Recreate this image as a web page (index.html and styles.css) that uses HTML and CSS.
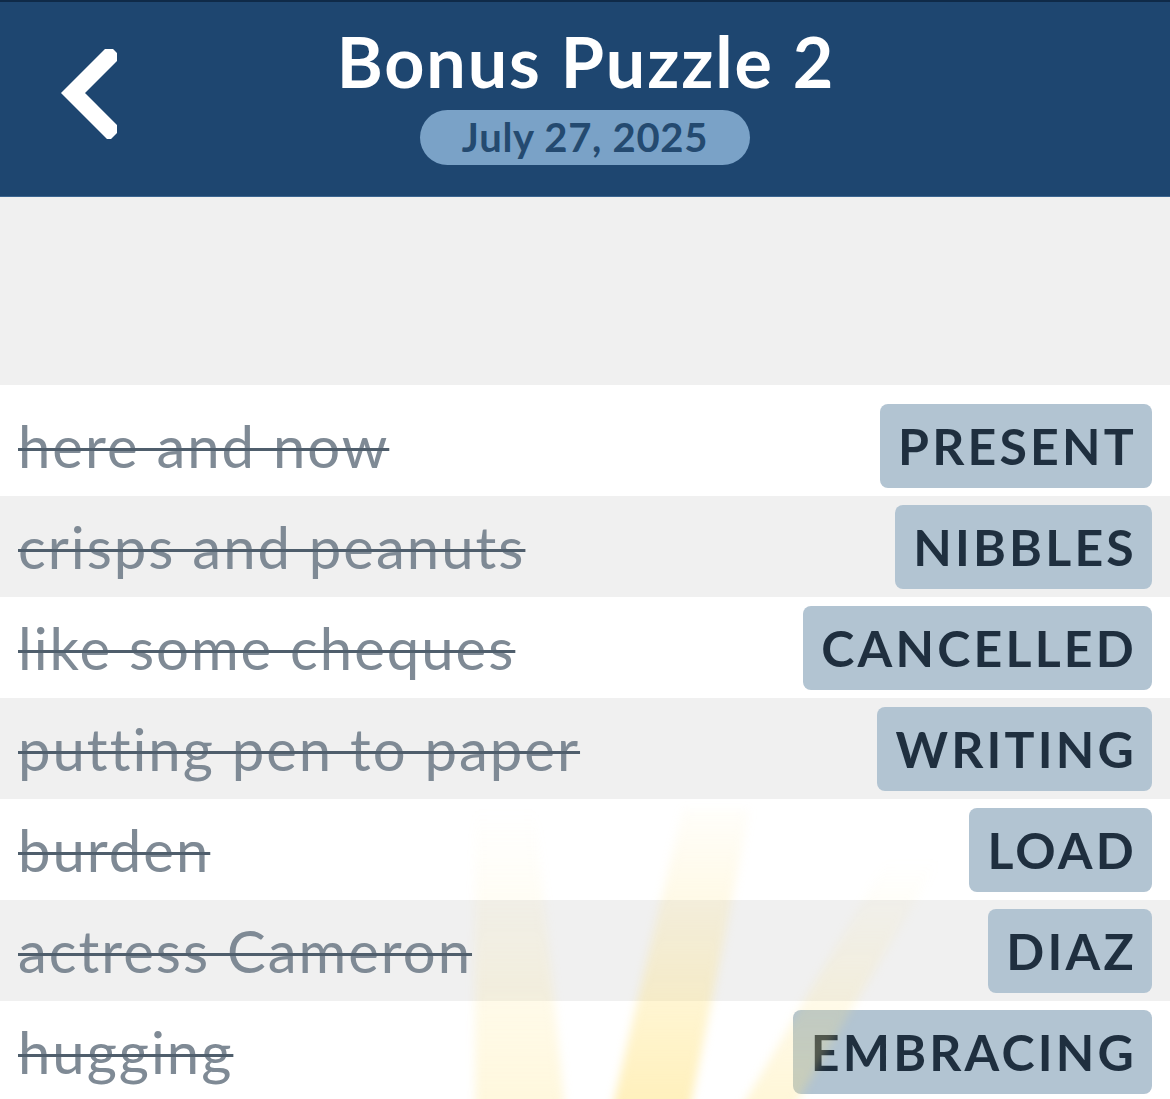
FILE: index.html
```html
<!DOCTYPE html>
<html>
<head>
<meta charset="utf-8">
<link rel="stylesheet" href="styles.css">
</head>
<body>
<div class="app">
  <header class="header">
    <button class="back" aria-label="Back">
      <svg width="60" height="90" viewBox="0 0 60 90"><path d="M52 8 L16 44 L52 80" fill="none" stroke="#fff" stroke-width="17" stroke-linecap="square" stroke-linejoin="miter"/></svg>
    </button>
    <div class="titles">
      <h1 class="title">Bonus Puzzle 2</h1>
      <div class="date">July 27, 2025</div>
    </div>
  </header>
  <div class="spacer"></div>
  <ul class="list">
    <li class="row"><span class="clue">here and now</span><span class="answer">PRESENT</span></li>
    <li class="row alt"><span class="clue">crisps and peanuts</span><span class="answer">NIBBLES</span></li>
    <li class="row"><span class="clue">like some cheques</span><span class="answer">CANCELLED</span></li>
    <li class="row alt"><span class="clue">putting pen to paper</span><span class="answer">WRITING</span></li>
    <li class="row"><span class="clue">burden</span><span class="answer">LOAD</span></li>
    <li class="row alt"><span class="clue">actress Cameron</span><span class="answer">DIAZ</span></li>
    <li class="row"><span class="clue">hugging</span><span class="answer">EMBRACING</span></li>
  </ul>
  <div class="rays">
    <div class="ray r1"></div>
    <div class="ray r2"></div>
    <div class="ray r3"></div>
  </div>
</div>
</body>
</html>
```
FILE: styles.css
```css
* { box-sizing: border-box; }
html, body { margin: 0; padding: 0; }
body {
  width: 1170px;
  height: 1099px;
  overflow: hidden;
  background: #ffffff;
  font-family: Lato, "Noto Sans", sans-serif;
}
.app {
  position: relative;
  width: 1170px;
  height: 1099px;
  overflow: hidden;
  background: #f0f0f0;
}
.header {
  height: 197px;
  background: #1e4670;
  border-top: 2px solid #0f2a48;
  border-bottom: 1px solid #3b6590;
  display: flex;
  align-items: flex-start;
  position: relative;
}
.back {
  position: absolute;
  left: 52px;
  top: 44px;
  background: none;
  border: 0;
  padding: 0;
  width: 70px;
  height: 95px;
  display: flex;
  align-items: center;
  justify-content: center;
}
.titles {
  flex: 1;
  display: flex;
  flex-direction: column;
  align-items: center;
  padding-top: 18px;
}
.title {
  margin: 0;
  color: #ffffff;
  font-weight: 700;
  font-size: 70px;
  line-height: 82px;
  letter-spacing: 1.9px;
  padding-left: 2px;
}
.date {
  margin-top: 8px;
  width: 330px;
  height: 55px;
  border-radius: 28px;
  background: #7aa2c7;
  color: #244a70;
  font-weight: 700;
  font-size: 40px;
  line-height: 55px;
  letter-spacing: 0.7px;
  text-align: center;
}
.spacer { height: 188px; }
.list {
  list-style: none;
  margin: 0;
  padding: 10px 0 0 0;
  background: #ffffff;
}
.row {
  height: 101px;
  display: flex;
  align-items: center;
  justify-content: space-between;
  padding: 0 18px 0 18px;
  background: #ffffff;
}
.row.alt { background: #f0f0f0; }
.clue {
  color: #7f8a95;
  font-size: 58px;
  font-weight: 400;
  letter-spacing: 2px;
  text-decoration: line-through;
  text-decoration-color: #4f5e6c;
  text-decoration-thickness: 3px;
  white-space: nowrap;
}
.answer {
  height: 84px;
  padding: 0 15px 0 18px;
  border-radius: 8px;
  background: #b2c4d2;
  color: #1f2f3f;
  font-weight: 700;
  font-size: 50px;
  line-height: 84px;
  letter-spacing: 3.2px;
  white-space: nowrap;
}
.rays {
  position: absolute;
  left: 0;
  top: 780px;
  width: 1170px;
  height: 319px;
  pointer-events: none;
  filter: blur(5px);
}
.ray {
  position: absolute;
  bottom: -10px;
}
.r1 {
  left: 430px;
  width: 150px;
  height: 300px;
  clip-path: polygon(30% 0, 70% 0, 90% 100%, 30% 100%);
  background: linear-gradient(to top, rgba(255, 230, 140, 0.3), rgba(255, 235, 160, 0));
}
.r2 {
  left: 600px;
  width: 150px;
  height: 300px;
  clip-path: polygon(55% 0, 100% 0, 60% 100%, 8% 100%);
  background: linear-gradient(to top, rgba(255, 225, 120, 0.5), rgba(255, 230, 150, 0.05));
}
.r3 {
  left: 730px;
  width: 210px;
  height: 250px;
  clip-path: polygon(75% 0, 100% 0, 30% 100%, 5% 100%);
  background: linear-gradient(to top, rgba(255, 228, 130, 0.32), rgba(255, 235, 160, 0));
}
```
